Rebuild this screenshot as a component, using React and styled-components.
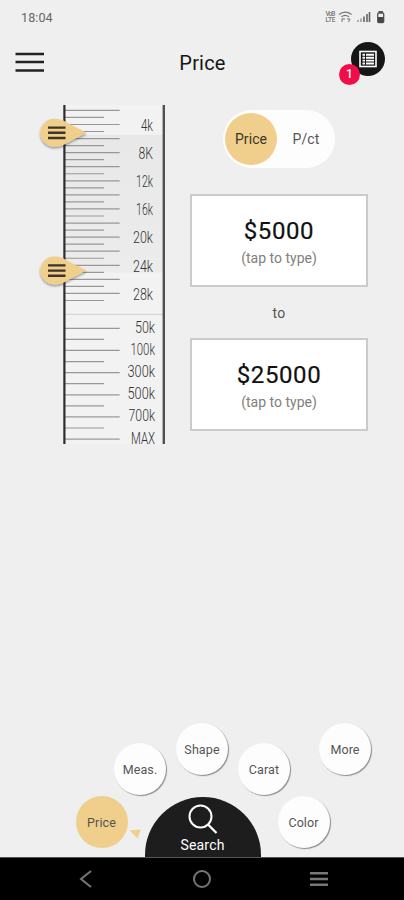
import React, { useState } from "react";
import styled, { createGlobalStyle } from "styled-components";

const GlobalStyle = createGlobalStyle`
  * {
    box-sizing: border-box;
  }
  body {
    margin: 0;
    background: #efefef;
  }
  button {
    padding: 0;
    border: none;
    background: none;
    font: inherit;
    color: inherit;
  }
  svg {
    display: block;
  }
`;

const Screen = styled.div`
  display: flex;
  flex-direction: column;
  width: 404px;
  height: 900px;
  overflow: hidden;
  background: #efefef;
  color: #1c1c1c;
  font-family: Roboto, "Liberation Sans", sans-serif;
`;

const StatusBar = styled.div`
  display: flex;
  align-items: center;
  justify-content: space-between;
  height: 34px;
  padding: 0 18px 0 21px;
  font-size: 12.5px;
  letter-spacing: 0.1px;
  color: #666;
`;

const Header = styled.header`
  display: grid;
  grid-template-columns: 60px 1fr 60px;
  align-items: center;
  height: 57px;
  padding: 0 14px 0 15px;
`;

const Title = styled.h1`
  margin: 1px 0 0;
  font-size: 20px;
  font-weight: 400;
  letter-spacing: 0.2px;
  text-align: center;
  color: #151515;
`;

const ListButton = styled.button`
  position: relative;
  display: flex;
  align-items: center;
  justify-content: center;
  justify-self: end;
  width: 34px;
  height: 34px;
  margin: -7px 5px 0 0;
  border-radius: 50%;
  background: #161616;
`;

const Badge = styled.span`
  position: absolute;
  left: -12px;
  top: 22px;
  width: 21px;
  height: 21px;
  border-radius: 50%;
  background: #f20d48;
  color: #fff;
  font-size: 12px;
  font-weight: 500;
  line-height: 21px;
  text-align: center;
`;

const Content = styled.main`
  display: flex;
  flex: 1;
  align-items: flex-start;
  padding: 14px 36px 0 38px;
`;

const Filters = styled.div`
  display: flex;
  flex: 1;
  flex-direction: column;
  align-items: center;
  padding: 5px 0 0 22px;
`;

const Toggle = styled.div`
  display: flex;
  align-items: center;
  width: 112px;
  height: 58px;
  padding: 0 2px;
  border-radius: 29px;
  background: #fdfdfd;
`;

const ToggleOption = styled.button`
  flex: 0 0 ${(props) => (props.$active ? "52px" : "58px")};
  height: 52px;
  border-radius: 50%;
  background: ${(props) => (props.$active ? "#f0cf8c" : "transparent")};
  color: ${(props) => (props.$active ? "#3c352a" : "#555")};
  font-size: 14px;
  letter-spacing: 0.1px;
`;

const PriceBox = styled.button`
  display: flex;
  flex-direction: column;
  align-items: center;
  flex: none;
  width: 178px;
  height: 93px;
  padding-top: 21px;
  border: 2px solid #cbcbcb;
  background: #fff;
`;

const Amount = styled.span`
  font-size: 24px;
  line-height: 28px;
  letter-spacing: 0.6px;
  color: #111;
  -webkit-text-stroke: 0.2px #111;
`;

const Hint = styled.span`
  margin-top: 5px;
  font-size: 14px;
  line-height: 16px;
  color: #808080;
`;

const To = styled.span`
  height: 51px;
  font-size: 14px;
  line-height: 53px;
  letter-spacing: 0.2px;
  color: #555;
`;

const Gap = styled.div`
  height: 26px;
`;

const Menu = styled.nav`
  display: flex;
  flex-direction: column;
  height: 134px;
`;

const UpperRow = styled.div`
  display: flex;
  gap: 10px;
  height: 74px;
  padding-left: 114px;
`;

const LowerRow = styled.div`
  position: relative;
  display: flex;
  align-items: flex-start;
  gap: 17px;
  padding-left: 75.5px;
`;

const Bubble = styled.button`
  flex: none;
  width: 52px;
  height: 52px;
  margin-top: ${(props) => (props.$low ? "20px" : "0")};
  margin-left: ${(props) => (props.$apart ? "19px" : "0")};
  border-radius: 50%;
  background: ${(props) => (props.$active ? "#f0cf8c" : "#fdfdfd")};
  box-shadow: ${(props) => (props.$active ? "none" : "1px 1px 1px rgba(0, 0, 0, 0.42)")};
  color: #555;
  font-size: 12.5px;
  letter-spacing: 0.1px;
`;

const LowerBubble = styled(Bubble)`
  margin-top: -1px;
`;

const ActiveArrow = styled.svg`
  position: absolute;
  left: 129px;
  top: 32px;
`;

const SearchButton = styled.button`
  display: flex;
  flex-direction: column;
  align-items: center;
  width: 116px;
  height: 60px;
  padding-top: 7px;
  border-radius: 58px 58px 0 0;
  background: #1d1d1d;
  color: #fff;
  font-size: 14px;
  line-height: 18px;
  letter-spacing: 0.2px;
`;

const NavBar = styled.div`
  display: flex;
  align-items: center;
  justify-content: space-between;
  height: 43px;
  padding: 0 75px 0 79px;
  border-top: 1px solid #555;
  background: #000;
`;

// small marks, one every 1k up to 28k
const fineTicks = Array.from({ length: 28 }, (_, i) => ({
  y: 5.4 + i * 7.04,
  long: i % 2 === 0,
}));

// coarse marks from 50k to MAX
const coarseTicks = Array.from({ length: 11 }, (_, i) => ({
  y: 223.3 + i * 11.08,
  long: i % 2 === 0,
}));

const labels = [
  { text: "4k", y: 20.3, width: 12 },
  { text: "8K", y: 48.4, width: 14.5 },
  { text: "12k", y: 76.6, width: 17 },
  { text: "16k", y: 104.8, width: 17 },
  { text: "20k", y: 133, width: 20 },
  { text: "24k", y: 161.2, width: 20 },
  { text: "28k", y: 189.4, width: 20 },
  { text: "50k", y: 222.8, width: 20 },
  { text: "100k", y: 244.8, width: 24.5 },
  { text: "300k", y: 266.8, width: 27.5 },
  { text: "500k", y: 289, width: 27.5 },
  { text: "700k", y: 311, width: 26.5 },
  { text: "MAX", y: 333.2, width: 24 },
];

const Marker = ({ y }) => (
  <g transform={`translate(0 ${y})`}>
    <g filter="url(#markerShadow)">
      <path
        d="M48.5 0 L28.5 -10.2 C25 -12.8 21 -14 16.5 -14 A14.2 14 0 0 0 16.5 14 C21 14 25 12.8 28.5 10.4 Z"
        fill="#f0cf8c"
      />
    </g>
    <path d="M10 -5.2H27.5M10 0H27.5M10 5.2H27.5" stroke="#3d352a" strokeWidth="2.4" />
  </g>
);

const Scale = ({ from, to }) => (
  <svg width="130" height="340" viewBox="0 0 130 340" overflow="visible">
    <defs>
      <filter id="markerShadow" x="-20%" y="-20%" width="140%" height="150%">
        <feDropShadow dx="0" dy="1.5" stdDeviation="1" floodOpacity="0.4" />
      </filter>
      <linearGradient id="range" x1="0" y1="0" x2="0" y2="1">
        <stop offset="0" stopColor="#e8e8e8" />
        <stop offset="1" stopColor="#ececec" />
      </linearGradient>
    </defs>
    <rect x="26" width="99" height="339" fill="#f2f2f2" />
    <rect x="26" y={from + 2} width="99" height={to - from} fill="url(#range)" />
    {[...fineTicks, ...coarseTicks].map((tick) => (
      <line
        key={tick.y}
        x1="26"
        x2={tick.long ? 81.7 : 66}
        y1={tick.y}
        y2={tick.y}
        stroke="#989898"
        strokeWidth="1.2"
      />
    ))}
    <line x1="26" x2="125" y1="209.3" y2="209.3" stroke="#cfcfcf" />
    <rect x="25.3" width="2.2" height="339" fill="#2d2d2d" />
    <rect x="124.6" width="2.4" height="339" fill="#505050" />
    {labels.map((label, i) => (
      <text
        key={label.text}
        x={(i < 7 ? 115 : 117) - label.width}
        y={label.y + 5.3}
        textLength={label.width}
        lengthAdjust="spacingAndGlyphs"
        fontSize="16.2"
        fontWeight="300"
        fill="#333"
      >
        {label.text}
      </text>
    ))}
    <Marker y={from} />
    <Marker y={to} />
  </svg>
);

const StatusIcons = () => (
  <svg width="62" height="16" viewBox="0 0 62 16" fill="none">
    <g fill="#777" fontSize="6.5" fontWeight="500">
      <text x="1.5" y="7" textLength="10">VoB</text>
      <text x="1.5" y="13.4" textLength="10">LTE</text>
    </g>
    <path d="M15 5.5Q21 0.8 27.5 5.5M17.5 7.8Q21 5 25 7.8" stroke="#777" strokeWidth="1.3" />
    <path d="M18 9.5V13M18 10H21M23 10H26L24.5 13" stroke="#777" />
    <path d="M34 11V13M37 9.5V13" stroke="#999" strokeWidth="1.5" />
    <path d="M40 7.5V13M43 5V13M45.5 3V13" stroke="#666" strokeWidth="1.6" />
    <rect x="53.7" y="4" width="6" height="9.5" rx="1" stroke="#555" strokeWidth="1.3" />
    <path d="M54.5 3H59" stroke="#555" strokeWidth="2" />
    <rect x="54" y="8" width="5.5" height="5.5" fill="#444" />
  </svg>
);

const App = () => {
  const [mode, setMode] = useState("Price");
  const [tab, setTab] = useState("Price");

  return (
    <>
      <GlobalStyle />
      <Screen>
        <StatusBar>
          <span>18:04</span>
          <StatusIcons />
        </StatusBar>

        <Header>
          <button aria-label="Menu">
            <svg width="30" height="22" viewBox="0 0 30 22">
              <path d="M0.5 2H29M0.5 10.1H29M0.5 18.4H29" stroke="#222" strokeWidth="2.5" />
            </svg>
          </button>
          <Title>Price</Title>
          <ListButton aria-label="Saved list">
            <svg width="20" height="20" viewBox="0 0 20 20" fill="none" stroke="#fff">
              <rect x="2" y="2.5" width="16" height="15" strokeWidth="1.6" />
              <path d="M4.5 5.8H7M8 5.8H16M4.5 8.7H7M8 8.7H16M4.5 11.6H7M8 11.6H16M4.5 14.5H7M8 14.5H16" strokeWidth="1.9" />
            </svg>
            <Badge>1</Badge>
          </ListButton>
        </Header>

        <Content>
          <Scale from={27.8} to={165.6} />
          <Filters>
            <Toggle>
              {["Price", "P/ct"].map((name) => (
                <ToggleOption key={name} $active={mode === name} onClick={() => setMode(name)}>
                  {name}
                </ToggleOption>
              ))}
            </Toggle>
            <Gap />
            <PriceBox>
              <Amount>$5000</Amount>
              <Hint>(tap to type)</Hint>
            </PriceBox>
            <To>to</To>
            <PriceBox>
              <Amount>$25000</Amount>
              <Hint>(tap to type)</Hint>
            </PriceBox>
          </Filters>
        </Content>

        <Menu>
          <UpperRow>
            <Bubble $low onClick={() => setTab("Meas.")} $active={tab === "Meas."}>Meas.</Bubble>
            <Bubble onClick={() => setTab("Shape")} $active={tab === "Shape"}>Shape</Bubble>
            <Bubble $low onClick={() => setTab("Carat")} $active={tab === "Carat"}>Carat</Bubble>
            <Bubble $apart onClick={() => setTab("More")} $active={tab === "More"}>More</Bubble>
          </UpperRow>
          <LowerRow>
            <LowerBubble onClick={() => setTab("Price")} $active={tab === "Price"}>Price</LowerBubble>
            <SearchButton>
              <svg width="30" height="32" viewBox="0 0 30 32" fill="none" stroke="#fff">
                <circle cx="12.5" cy="12.5" r="11" strokeWidth="2" />
                <path d="M20 20.5L28.5 29" strokeWidth="2.3" />
              </svg>
              Search
            </SearchButton>
            <LowerBubble onClick={() => setTab("Color")} $active={tab === "Color"}>Color</LowerBubble>
            <ActiveArrow width="13" height="11" viewBox="0 0 13 11">
              <path d="M0.8 1.5L11.8 0.5L8.5 9.5Z" fill="#f0cf8c" />
            </ActiveArrow>
          </LowerRow>
        </Menu>

        <NavBar>
          <svg width="14" height="18" viewBox="0 0 14 18" fill="none">
            <path d="M12 1L2 9L12 17" stroke="#777" strokeWidth="2" />
          </svg>
          <svg width="20" height="20" viewBox="0 0 20 20" fill="none">
            <circle cx="11" cy="10" r="8" stroke="#777" strokeWidth="2" />
          </svg>
          <svg width="20" height="18" viewBox="0 0 20 18">
            <path d="M1 3.2H19M1 9H19M1 14.8H19" stroke="#777" strokeWidth="2.4" />
          </svg>
        </NavBar>
      </Screen>
    </>
  );
};

export default App;
